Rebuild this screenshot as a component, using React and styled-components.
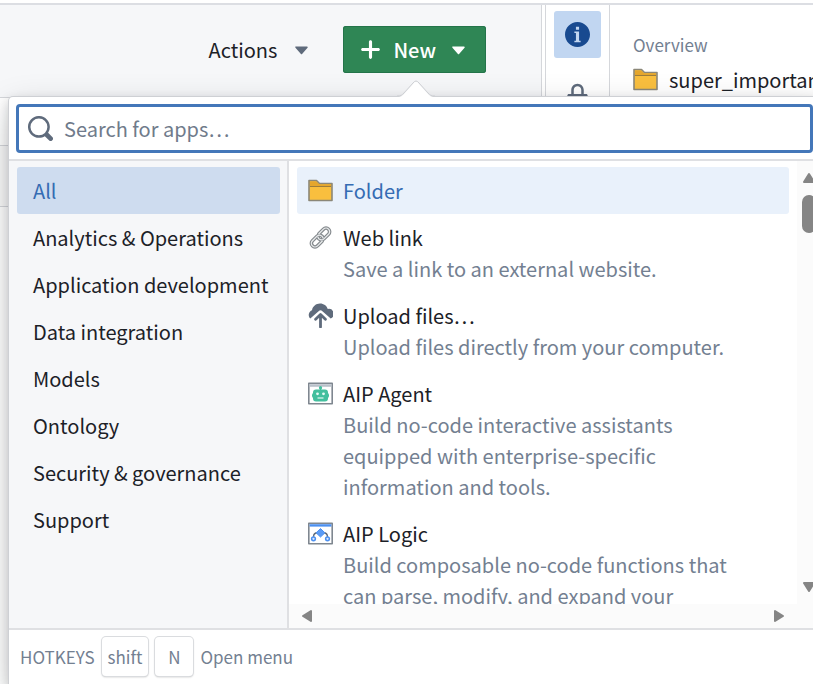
import React from "react";
import styled, { createGlobalStyle, css } from "styled-components";

const GlobalStyle = createGlobalStyle`
  *, *::before, *::after { box-sizing: border-box; }
  html, body, #root { height: 100%; margin: 0; }
  body {
    overflow: hidden;
    background: #ffffff;
    color: #1c2127;
    font-family: "Noto Sans CJK SC", "Noto Sans", sans-serif;
    font-size: 20px;
    line-height: 31px;
  }
  button, input, kbd { font: inherit; color: inherit; }
  svg { display: block; flex: none; }
`;

const Page = styled.div`
  position: relative;
  min-height: 100vh;
  overflow: hidden;
  display: flex;
  flex-direction: column;
  padding-top: 3px;
`;

const Workspace = styled.div`
  flex: 1;
  display: flex;
  border-top: 2px solid #dcdee3;
`;

const MainColumn = styled.main`
  flex: 1;
  min-width: 0;
  display: flex;
  flex-direction: column;
  border-right: 1px solid #d5d7db;
`;

const Toolbar = styled.header`
  height: 93px;
  flex: none;
  display: flex;
  align-items: center;
  justify-content: flex-end;
  gap: 19px;
  padding: 0 55px 3px 0;
  background: #f6f7f9;
  border-bottom: 1px solid #d5d7db;
`;

const ToolbarButton = styled.button`
  display: flex;
  align-items: center;
  gap: 12px;
  height: 47px;
  padding: 0 10px 0 15px;
  border: 0;
  border-radius: 3px;
  background: transparent;
  color: #1c2127;
  ${(p) =>
    p.$primary &&
    css`
      gap: 10px;
      padding: 0 15px;
      background: #2f8655;
      color: #ffffff;
      font-weight: 500;
      box-shadow: inset 0 0 0 1px #24744a;
    `}
`;

const BackgroundRow = styled.div`
  height: ${(p) => p.$height};
  flex: none;
  background: ${(p) => p.$tone};
  border-bottom: 1px solid #d5d7db;
`;

const IconRail = styled.nav`
  width: 65px;
  flex: none;
  margin-left: 3px;
  display: flex;
  flex-direction: column;
  align-items: center;
  gap: 14px;
  padding-top: 6px;
  border-left: 1px solid #d5d7db;
  border-right: 1px solid #d5d7db;
`;

const RailButton = styled.button`
  display: grid;
  place-items: center;
  width: 47px;
  height: 47px;
  padding: 0;
  border: 0;
  border-radius: 3px;
  background: ${(p) => (p.$active ? "#c1d6f1" : "transparent")};
  color: ${(p) => (p.$active ? "#184a90" : "#5f6b7c")};
`;

const Details = styled.aside`
  width: 203px;
  flex: none;
  overflow: hidden;
  padding: 24px 0 0 23px;
`;

const DetailsLabel = styled.div`
  color: #738091;
  font-size: 17px;
  white-space: nowrap;
`;

const Resource = styled.div`
  display: flex;
  align-items: center;
  gap: 11px;
  margin-top: 4px;
  white-space: nowrap;
`;

const Popover = styled.section`
  position: absolute;
  top: 97px;
  left: 9px;
  right: -8px;
  bottom: 0;
  display: flex;
  flex-direction: column;
  background: #ffffff;
  border-radius: 4px 4px 0 0;
  box-shadow: 0 0 0 1px #ced0d4, 0 4px 12px rgba(17, 20, 24, 0.2),
    0 12px 36px rgba(17, 20, 24, 0.2);
`;

const PopoverArrow = styled.svg`
  position: absolute;
  top: -18px;
  left: 386px;
`;

const SearchArea = styled.div`
  padding: 7px 8px 6px 7px;
  border-bottom: 2px solid #dfe0e3;
`;

const SearchBox = styled.label`
  display: flex;
  align-items: center;
  gap: 11px;
  height: 49px;
  padding: 0 9px;
  border: 3px solid #4477b9;
  border-radius: 4px;
  color: #5f6b7c;
`;

const SearchInput = styled.input`
  flex: 1;
  min-width: 0;
  padding: 0;
  border: 0;
  outline: 0;
  background: transparent;
  &::placeholder { color: #707b8b; opacity: 1; }
`;

const Browser = styled.div`
  flex: 1;
  min-height: 0;
  display: flex;
`;

const Categories = styled.nav`
  width: 280px;
  flex: none;
  padding: 6px 7px 6px 8px;
  background: #f6f7f9;
  border-right: 2px solid #dfe0e3;
`;

const Category = styled.button`
  display: block;
  width: 100%;
  height: 47px;
  padding: 0 16px;
  border: 0;
  border-radius: 3px;
  background: ${(p) => (p.$active ? "#cedcef" : "transparent")};
  color: ${(p) => (p.$active ? "#356cb3" : "#1c2127")};
  text-align: left;
  white-space: nowrap;
`;

const Results = styled.div`
  flex: 1;
  min-width: 0;
  display: grid;
  grid-template-columns: minmax(0, 1fr) 24px;
  grid-template-rows: minmax(0, 1fr) 24px;
`;

const AppList = styled.div`
  overflow: hidden;
  padding: 6px 8px 0;
`;

const AppItem = styled.button`
  display: flex;
  align-items: flex-start;
  gap: 10px;
  width: 100%;
  padding: 8px 56px 8px 11px;
  border: 0;
  border-radius: 3px;
  background: ${(p) => (p.$active ? "#e9f1fb" : "transparent")};
  color: ${(p) => (p.$active ? "#356cb3" : "#1c2127")};
  text-align: left;
`;

const ItemIcon = styled.span`
  height: 31px;
  display: flex;
  align-items: center;
`;

const ItemName = styled.span`
  display: block;
`;

const ItemText = styled.span`
  display: block;
  color: #738091;
`;

const ScrollTrack = styled.div`
  display: flex;
  flex-direction: ${(p) => (p.$vertical ? "column" : "row")};
  align-items: center;
  justify-content: space-between;
  padding: ${(p) => (p.$vertical ? "10px 0" : "0 12px")};
  background: #fbfbfb;
  color: #858585;
`;

const ScrollStart = styled.div`
  display: flex;
  flex-direction: column;
  align-items: center;
  gap: 10px;
`;

const ScrollThumb = styled.div`
  width: 14px;
  height: 38px;
  border-radius: 7px;
  background: #858585;
`;

const ScrollCorner = styled.div`
  background: #fbfbfb;
`;

const Footer = styled.footer`
  display: flex;
  align-items: center;
  gap: 7px;
  height: 56px;
  padding: 0 11px 1px;
  border-top: 2px solid #dfe0e3;
  color: #738091;
  font-size: 17px;
`;

const Key = styled.kbd`
  display: grid;
  place-items: center;
  min-width: 38px;
  height: 39px;
  padding: 0 6px;
  border-radius: 4px;
  background: #ffffff;
  box-shadow: 0 0 0 1px #dadcdf, 0 1px 2px rgba(17, 20, 24, 0.3);
`;

const glyphs = {
  search:
    "M15.55 13.43l-2.67-2.68a6.94 6.94 0 001.11-3.76c0-3.87-3.13-7-7-7s-7 3.13-7 7 3.13 7 7 7c1.39 0 2.68-.42 3.76-1.11l2.68 2.67a1.498 1.498 0 102.12-2.12zM6.99 12.39a5.4 5.4 0 110-10.8 5.4 5.4 0 010 10.8z",
  caret:
    "M12 6.5c0-.28-.22-.5-.5-.5h-7a.495.495 0 00-.37.83l3.5 4c.09.1.22.17.37.17s.28-.07.37-.17l3.5-4c.08-.09.13-.2.13-.33z",
  plus:
    "M13 7H9V3c0-.55-.45-1-1-1s-1 .45-1 1v4H3c-.55 0-1 .45-1 1s.45 1 1 1h4v4c0 .55.45 1 1 1s1-.45 1-1V9h4c.55 0 1-.45 1-1s-.45-1-1-1z",
  info:
    "M8 0C3.58 0 0 3.58 0 8s3.58 8 8 8 8-3.58 8-8-3.58-8-8-8zM7 3h2v2H7V3zm3 10H6v-1h1V7H6V6h3v6h1v1z",
  lock:
    "M13.500 7H12V4.500C12 2.300 10.200.5 8 .5S4 2.300 4 4.500V7H2.500c-.55 0-1 .45-1 1v7c0 .55.45 1 1 1h11c.55 0 1-.45 1-1V8c0-.55-.45-1-1-1zM5.600 4.500C5.600 3.200 6.700 2.100 8 2.100s2.400 1.100 2.400 2.400V7H5.600V4.500z",
};

function Glyph({ name, color }) {
  return (
    <svg width="25" height="25" viewBox="0 0 16 16" fill={color || "currentColor"} fillRule="evenodd" aria-hidden="true">
      <path d={glyphs[name]} />
    </svg>
  );
}

function FolderIcon() {
  return (
    <svg width="25" height="25" viewBox="0 0 25 25" aria-hidden="true">
      <path d="M1 2.500h7.500l3 3H24v17H1z" fill="#f9bf3e" stroke="#8b8778" strokeWidth="1.600" strokeLinejoin="round" />
      <path d="M2 3.500h6l3 2.800H23V8H2z" fill="#e5a62c" />
      <path d="M2 8.500h21" stroke="#9c7d3c" strokeWidth="1" />
    </svg>
  );
}

function LinkIcon() {
  return (
    <svg width="25" height="25" viewBox="0 0 25 25" fill="none" aria-hidden="true">
      <g transform="rotate(-45 12.500 12.500)" strokeLinecap="round">
        <g stroke="#858a8e" strokeWidth="3.600">
          <path d="M11 16.300H4.500a3.600 3.600 0 0 1 0-7.200H11a3.600 3.600 0 0 1 3 5.500" />
          <path d="M14 8.700h6.500a3.600 3.600 0 0 1 0 7.200H14a3.600 3.600 0 0 1-3-5.500" />
        </g>
        <g stroke="#e9ebec" strokeWidth="1.300">
          <path d="M11 16.300H4.500a3.600 3.600 0 0 1 0-7.200H11a3.600 3.600 0 0 1 3 5.500" />
          <path d="M14 8.700h6.500a3.600 3.600 0 0 1 0 7.200H14a3.600 3.600 0 0 1-3-5.500" />
        </g>
      </g>
    </svg>
  );
}

function UploadIcon() {
  return (
    <svg width="25" height="25" viewBox="0 0 25 25" fill="#5f6b7c" aria-hidden="true">
      <path d="M2.300 15.500A5 5 0 0 1 4 7.200C4.600 3.200 8 .4 12 .4c3.800 0 6.700 2.200 7.800 5.600a5 5 0 0 1 2.900 9.500L14.400 8.200a2.800 2.800 0 0 0-3.800 0z" />
      <path d="M12.500 24V12.500M7.600 16.200l4.900-4.800 4.900 4.800" fill="none" stroke="#5f6b7c" strokeWidth="2.800" strokeLinecap="round" strokeLinejoin="round" />
    </svg>
  );
}

function AgentIcon() {
  return (
    <svg width="25" height="25" viewBox="0 0 25 25" aria-hidden="true">
      <path d="M.8 2.300h23.400v20.400H.8z" fill="#fff" stroke="#7f8790" strokeWidth="1.600" strokeLinejoin="round" />
      <path d="M1.600 3.200h21.800v2.600H1.600z" fill="#b9c1ca" />
      <g fill="#43bf9e">
        <circle cx="12.500" cy="6.700" r="1.600" />
        <path d="M11.700 6h1.600v4h-1.600zM8 8.500h9q3 0 3 3v6q0 3-3 3H8q-3 0-3-3v-6q0-3 3-3z" />
        <rect x="4" y="12" width="17" height="5" rx="2" />
      </g>
      <circle cx="9.500" cy="12.800" r="1.400" fill="#e8fbf5" />
      <circle cx="15.500" cy="12.800" r="1.400" fill="#e8fbf5" />
      <path d="M9.500 17h6" stroke="#d7f4eb" strokeWidth="1.300" />
    </svg>
  );
}

function LogicIcon() {
  return (
    <svg width="25" height="25" viewBox="0 0 25 25" aria-hidden="true">
      <path d="M.8 2.300h23.400v20.400H.8z" fill="#fff" stroke="#7f8790" strokeWidth="1.600" strokeLinejoin="round" />
      <path d="M1.600 3.200h21.800v2.400H1.600z" fill="#4c90f0" />
      <path d="M5.500 16c0-3 1.500-4.300 4-4.300h6c2.500 0 4 1.300 4 4.300" fill="none" stroke="#5f6b7c" strokeWidth="1.400" />
      <path d="M12.500 7.600l4.400 4.200-4.400 4.200-4.400-4.200z" fill="#5b9bf5" stroke="#4c90f0" strokeLinejoin="round" />
      <circle cx="5.500" cy="17.800" r="1.900" fill="#dce9fc" stroke="#4c90f0" strokeWidth="1.500" />
      <circle cx="19.500" cy="17.800" r="1.900" fill="#dce9fc" stroke="#4c90f0" strokeWidth="1.500" />
    </svg>
  );
}

const arrowPaths = {
  up: "M7 3l5 8H2z",
  down: "M7 11L2 3h10z",
  left: "M2 7l8-5v10z",
  right: "M12 7L4 2v10z",
};

function ScrollArrow({ direction }) {
  return (
    <svg width="14" height="14" viewBox="0 0 14 14" aria-hidden="true">
      <path d={arrowPaths[direction]} fill="currentColor" stroke="currentColor" strokeWidth="2" strokeLinejoin="round" />
    </svg>
  );
}

const categories = [
  "All",
  "Analytics & Operations",
  "Application development",
  "Data integration",
  "Models",
  "Ontology",
  "Security & governance",
  "Support",
];

const apps = [
  { name: "Folder", Icon: FolderIcon },
  { name: "Web link", Icon: LinkIcon, text: "Save a link to an external website." },
  { name: "Upload files…", Icon: UploadIcon, text: "Upload files directly from your computer." },
  {
    name: "AIP Agent",
    Icon: AgentIcon,
    text: "Build no-code interactive assistants equipped with enterprise-specific information and tools.",
  },
  {
    name: "AIP Logic",
    Icon: LogicIcon,
    text: "Build composable no-code functions that can parse, modify, and expand your",
  },
];

export default function App() {
  return (
    <>
      <GlobalStyle />
      <Page>
        <Workspace>
          <MainColumn>
            <Toolbar>
              <ToolbarButton type="button">
                Actions
                <Glyph name="caret" color="#5f6b7c" />
              </ToolbarButton>
              <ToolbarButton type="button" $primary>
                <Glyph name="plus" />
                New
                <Glyph name="caret" />
              </ToolbarButton>
            </Toolbar>
            <BackgroundRow $height="48px" $tone="#ffffff" />
            <BackgroundRow $height="61px" $tone="#fafafa" />
          </MainColumn>
          <IconRail aria-label="Details panels">
            <RailButton type="button" aria-label="Info" $active>
              <Glyph name="info" />
            </RailButton>
            <RailButton type="button" aria-label="Access">
              <Glyph name="lock" />
            </RailButton>
          </IconRail>
          <Details>
            <DetailsLabel>Overview</DetailsLabel>
            <Resource>
              <FolderIcon />
              super_important
            </Resource>
          </Details>
        </Workspace>
        <Popover aria-label="New">
          <PopoverArrow width="42" height="20" viewBox="0 0 42 20" aria-hidden="true">
            <path d="M2 18c4 0 5-1 7-3L18 5q3-4 6 0l9 10c2 2 3 3 7 3v2H2z" fill="#ffffff" />
            <path d="M2 17c4 0 5-1 7-3L18 4q3-4 6 0l9 10c2 2 3 3 7 3" fill="none" stroke="#ced0d4" />
          </PopoverArrow>
          <SearchArea>
            <SearchBox>
              <Glyph name="search" />
              <SearchInput type="text" placeholder="Search for apps…" aria-label="Search for apps" />
            </SearchBox>
          </SearchArea>
          <Browser>
            <Categories aria-label="Categories">
              {categories.map((name, i) => (
                <Category key={name} type="button" $active={i === 0}>
                  {name}
                </Category>
              ))}
            </Categories>
            <Results>
              <AppList>
                {apps.map(({ name, Icon, text }, i) => (
                  <AppItem key={name} type="button" $active={i === 0}>
                    <ItemIcon>
                      <Icon />
                    </ItemIcon>
                    <span>
                      <ItemName>{name}</ItemName>
                      {text && <ItemText>{text}</ItemText>}
                    </span>
                  </AppItem>
                ))}
              </AppList>
              <ScrollTrack $vertical>
                <ScrollStart>
                  <ScrollArrow direction="up" />
                  <ScrollThumb />
                </ScrollStart>
                <ScrollArrow direction="down" />
              </ScrollTrack>
              <ScrollTrack>
                <ScrollArrow direction="left" />
                <ScrollArrow direction="right" />
              </ScrollTrack>
              <ScrollCorner />
            </Results>
          </Browser>
          <Footer>
            HOTKEYS <Key>shift</Key> <Key>N</Key> Open menu
          </Footer>
        </Popover>
      </Page>
    </>
  );
}
